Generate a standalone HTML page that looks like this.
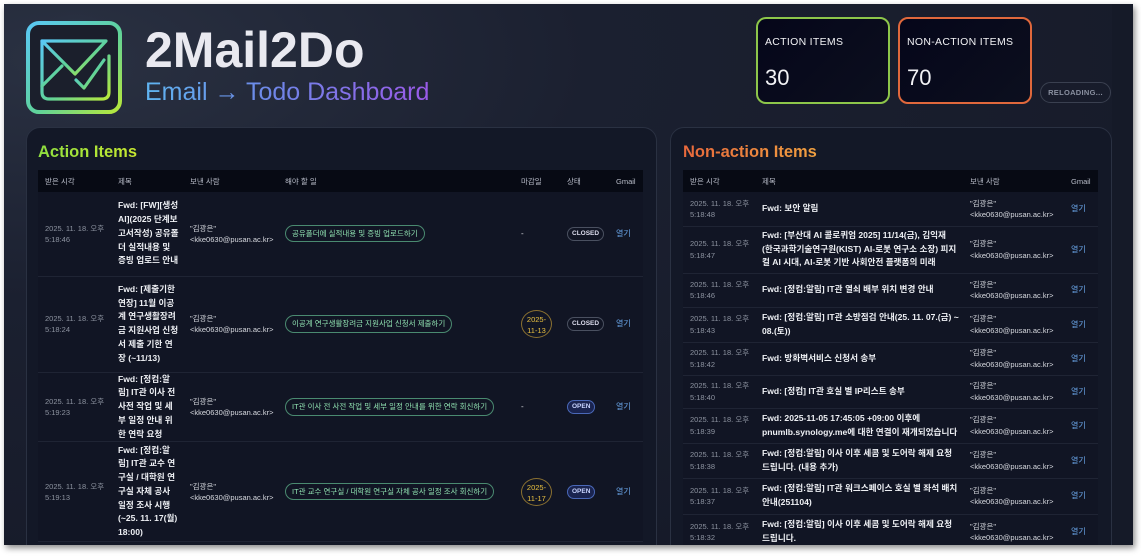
<!DOCTYPE html>
<html><head><meta charset="utf-8"><style>
*{box-sizing:border-box;margin:0;padding:0}
html,body{width:1141px;height:557px;background:#fff;overflow:hidden;font-family:"Liberation Sans","Noto Sans CJK KR",sans-serif}
#frame{position:absolute;left:4px;top:4px;width:1129px;height:541px;overflow:hidden;background:radial-gradient(ellipse at 5% 10%,#2a3142 0%,#1b2030 35%,#141826 100%);box-shadow:2px 3px 6px rgba(0,0,0,.45)}
.abs{position:absolute}
.title{left:141px;top:17px;font-size:50px;font-weight:bold;color:#e9e9f0;letter-spacing:0}
.sub{left:141px;top:74px;font-size:25px;background:linear-gradient(90deg,#5fb4f0,#6f86e8 45%,#9a5ae8);-webkit-background-clip:text;background-clip:text;color:transparent}
.card{border:2px solid;border-radius:10px;background:linear-gradient(135deg,#05061a,#0c0f1e);color:#f2f2f5}
.card .l{position:absolute;left:7px;top:17px;font-size:10.5px;letter-spacing:.3px}
.card .n{position:absolute;left:7px;top:46px;font-size:22px}
.reload{left:1036px;top:78px;width:71px;height:21px;border:1px solid #3a4050;border-radius:11px;color:#8a90a0;font-size:7.5px;font-weight:bold;text-align:center;line-height:19px;letter-spacing:.3px}
.panel{background:#131827;border:1px solid #2a3142;border-radius:14px}
.ph{font-size:16.5px;font-weight:bold}
table{border-collapse:collapse;table-layout:fixed;position:absolute}
th{background:#070a14;color:#b8bcc8;font-size:7.5px;font-weight:normal;text-align:left;height:22px;padding-left:7px}
td{background:#111524;border-bottom:1px solid #1f2434;font-size:8px;color:#d8dae0;vertical-align:middle;padding-left:7px;line-height:1.5}
td.t{color:#8d93a0;font-size:7.5px}
td.s{font-weight:bold;color:#eef0f4;font-size:8.6px;line-height:1.6;padding-right:4px}
td.f{font-size:7.5px}
td.g{color:#6aa6ea;font-size:8px}
.todo{display:inline-block;border:1px solid #4a8a70;border-radius:10px;padding:2px 6px;color:#8fe0b0;font-size:7.5px;white-space:nowrap}
.st{display:inline-block;border:1px solid #4a5060;border-radius:8px;padding:1px 4px;font-size:6.5px;font-weight:bold;color:#dde}
.st.o{border-color:#4a68b8;background:#1a2450;color:#c8d4ff}
.dl{display:inline-block;width:31px;height:28px;border:1px solid #8a7030;border-radius:50%;color:#e8c040;font-size:7.5px;text-align:center;line-height:1.5;padding-top:3px}
</style></head><body><div id="frame">
<svg class="abs" style="left:12px;top:4px" width="120" height="116" viewBox="0 0 120 116">
<defs><linearGradient id="lg" x1="0" y1="0" x2="1" y2="1"><stop offset="0" stop-color="#5ac8f5"/><stop offset="0.55" stop-color="#5fd29a"/><stop offset="1" stop-color="#b8e83a"/></linearGradient>
<radialGradient id="gl" cx=".5" cy=".5" r=".5"><stop offset="0" stop-color="#4a6a88" stop-opacity=".5"/><stop offset="1" stop-color="#2a3142" stop-opacity="0"/></radialGradient></defs>
<rect x="0" y="0" width="120" height="116" fill="url(#gl)"/>
<rect x="12" y="15" width="92" height="89" rx="11" fill="#1b1f2c" stroke="url(#lg)" stroke-width="4"/>
<g fill="none" stroke="url(#lg)" stroke-width="3.2" stroke-linecap="round" stroke-linejoin="round">
<path d="M26 33 H90 L59 66 Z"/>
<path d="M26 33 V84 Q26 91 33 91 H86 Q93 91 93 84 V48"/>
<path d="M26 78 L46 58"/>
<path d="M60 72 L68 80 L88 52"/>
</g></svg>
<div class="abs title">2Mail2Do</div>
<div class="abs sub">Email → Todo Dashboard</div>
<div class="abs card" style="left:752px;top:13px;width:134px;height:87px;border-color:#8dc64a"><div class="l">ACTION ITEMS</div><div class="n">30</div></div>
<div class="abs card" style="left:894px;top:13px;width:134px;height:87px;border-color:#e0683c"><div class="l">NON-ACTION ITEMS</div><div class="n">70</div></div>
<div class="abs reload">RELOADING...</div>

<div class="abs panel" style="left:22px;top:123px;width:631px;height:440px"></div>
<div class="abs ph" style="left:34px;top:139px;background:linear-gradient(90deg,#8fe040,#c8e830);-webkit-background-clip:text;color:transparent">Action Items</div>
<table style="left:34px;top:166px;width:605px">
<colgroup><col style="width:73px"><col style="width:72px"><col style="width:95px"><col style="width:236px"><col style="width:46px"><col style="width:49px"><col style="width:34px"></colgroup>
<tr><th>받은 시각</th><th>제목</th><th>보낸 사람</th><th>해야 할 일</th><th>마감일</th><th>상태</th><th>Gmail</th></tr>
<tr style="height:84px"><td class="t">2025. 11. 18. 오후<br>5:18:46</td><td class="s">Fwd: [FW][생성AI](2025 단계보고서작성) 공유폴더 실적내용 및 증빙 업로드 안내</td><td class="f">"김광은"<br>&lt;kke0630@pusan.ac.kr&gt;</td><td><span class="todo">공유폴더에 실적내용 및 증빙 업로드하기</span></td><td>-</td><td><span class="st">CLOSED</span></td><td class="g">열기</td></tr>
<tr style="height:96px"><td class="t">2025. 11. 18. 오후<br>5:18:24</td><td class="s">Fwd: [제출기한 연장] 11월 이공계 연구생활장려금 지원사업 신청서 제출 기한 연장 (~11/13)</td><td class="f">"김광은"<br>&lt;kke0630@pusan.ac.kr&gt;</td><td><span class="todo">이공계 연구생활장려금 지원사업 신청서 제출하기</span></td><td><span class="dl">2025-<br>11-13</span></td><td><span class="st">CLOSED</span></td><td class="g">열기</td></tr>
<tr style="height:69px"><td class="t">2025. 11. 18. 오후<br>5:19:23</td><td class="s">Fwd: [정컴:알림] IT관 이사 전 사전 작업 및 세부 일정 안내 위한 연락 요청</td><td class="f">"김광은"<br>&lt;kke0630@pusan.ac.kr&gt;</td><td><span class="todo">IT관 이사 전 사전 작업 및 세부 일정 안내를 위한 연락 회신하기</span></td><td>-</td><td><span class="st o">OPEN</span></td><td class="g">열기</td></tr>
<tr style="height:100px"><td class="t">2025. 11. 18. 오후<br>5:19:13</td><td class="s">Fwd: [정컴:알림] IT관 교수 연구실 / 대학원 연구실 자체 공사 일정 조사 시행(~25. 11. 17(월) 18:00)</td><td class="f">"김광은"<br>&lt;kke0630@pusan.ac.kr&gt;</td><td><span class="todo">IT관 교수 연구실 / 대학원 연구실 자체 공사 일정 조사 회신하기</span></td><td><span class="dl">2025-<br>11-17</span></td><td><span class="st o">OPEN</span></td><td class="g">열기</td></tr>
</table>

<div class="abs panel" style="left:666px;top:123px;width:442px;height:440px"></div>
<div class="abs ph" style="left:679px;top:139px;background:linear-gradient(90deg,#e8683c,#f0a040);-webkit-background-clip:text;color:transparent">Non-action Items</div>
<table style="left:679px;top:166px;width:415px">
<colgroup><col style="width:72px"><col style="width:208px"><col style="width:101px"><col style="width:34px"></colgroup>
<tr><th>받은 시각</th><th>제목</th><th>보낸 사람</th><th>Gmail</th></tr>
<tr style="height:34px"><td class="t">2025. 11. 18. 오후<br>5:18:48</td><td class="s">Fwd: 보안 알림</td><td class="f">"김광은"<br>&lt;kke0630@pusan.ac.kr&gt;</td><td class="g">열기</td></tr>
<tr style="height:47px"><td class="t">2025. 11. 18. 오후<br>5:18:47</td><td class="s">Fwd: [부산대 AI 콜로퀴엄 2025] 11/14(금), 김익재 (한국과학기술연구원(KIST) AI-로봇 연구소 소장) 피지컬 AI 시대, AI-로봇 기반 사회안전 플랫폼의 미래</td><td class="f">"김광은"<br>&lt;kke0630@pusan.ac.kr&gt;</td><td class="g">열기</td></tr>
<tr style="height:34px"><td class="t">2025. 11. 18. 오후<br>5:18:46</td><td class="s">Fwd: [정컴:알림] IT관 열쇠 배부 위치 변경 안내</td><td class="f">"김광은"<br>&lt;kke0630@pusan.ac.kr&gt;</td><td class="g">열기</td></tr>
<tr style="height:35px"><td class="t">2025. 11. 18. 오후<br>5:18:43</td><td class="s">Fwd: [정컴:알림] IT관 소방점검 안내(25. 11. 07.(금) ~ 08.(토))</td><td class="f">"김광은"<br>&lt;kke0630@pusan.ac.kr&gt;</td><td class="g">열기</td></tr>
<tr style="height:33px"><td class="t">2025. 11. 18. 오후<br>5:18:42</td><td class="s">Fwd: 방화벽서비스 신청서 송부</td><td class="f">"김광은"<br>&lt;kke0630@pusan.ac.kr&gt;</td><td class="g">열기</td></tr>
<tr style="height:33px"><td class="t">2025. 11. 18. 오후<br>5:18:40</td><td class="s">Fwd: [정컴] IT관 호실 별 IP리스트 송부</td><td class="f">"김광은"<br>&lt;kke0630@pusan.ac.kr&gt;</td><td class="g">열기</td></tr>
<tr style="height:35px"><td class="t">2025. 11. 18. 오후<br>5:18:39</td><td class="s">Fwd: 2025-11-05 17:45:05 +09:00 이후에 pnumlb.synology.me에 대한 연결이 재개되었습니다</td><td class="f">"김광은"<br>&lt;kke0630@pusan.ac.kr&gt;</td><td class="g">열기</td></tr>
<tr style="height:35px"><td class="t">2025. 11. 18. 오후<br>5:18:38</td><td class="s">Fwd: [정컴:알림] 이사 이후 세콤 및 도어락 해제 요청드립니다. (내용 추가)</td><td class="f">"김광은"<br>&lt;kke0630@pusan.ac.kr&gt;</td><td class="g">열기</td></tr>
<tr style="height:36px"><td class="t">2025. 11. 18. 오후<br>5:18:37</td><td class="s">Fwd: [정컴:알림] IT관 워크스페이스 호실 별 좌석 배치 안내(251104)</td><td class="f">"김광은"<br>&lt;kke0630@pusan.ac.kr&gt;</td><td class="g">열기</td></tr>
<tr style="height:36px"><td class="t">2025. 11. 18. 오후<br>5:18:32</td><td class="s">Fwd: [정컴:알림] 이사 이후 세콤 및 도어락 해제 요청드립니다.</td><td class="f">"김광은"<br>&lt;kke0630@pusan.ac.kr&gt;</td><td class="g">열기</td></tr>
</table>
<div class="abs" style="left:1108px;top:0;width:21px;height:541px;background:#151a28"></div>
</div></body></html>
